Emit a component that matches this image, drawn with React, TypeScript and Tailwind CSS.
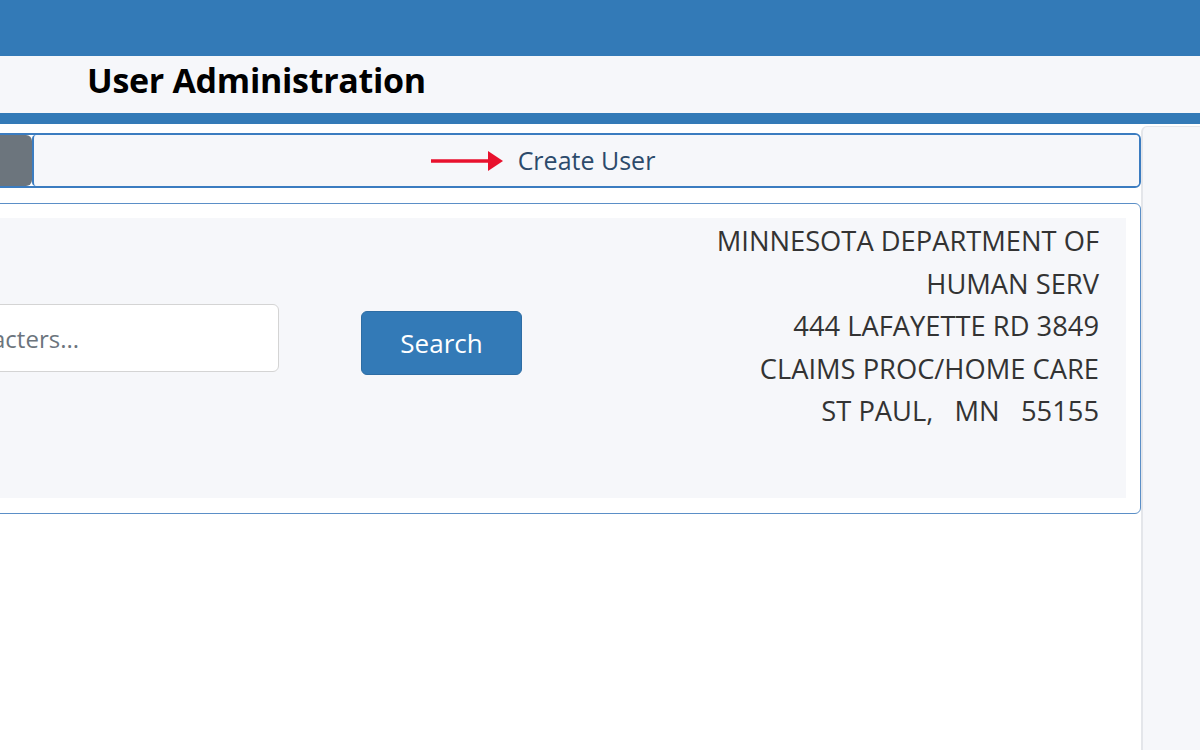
export default function App() {
    return (
        <div className="w-[1200px] h-[750px] overflow-hidden bg-white" style={{ fontFamily: '"Open Sans", "Noto Sans", sans-serif' }}>
            <div className="h-[56px] bg-[#337ab7]" />
            <div className="h-[57px] bg-[#f6f7fa] flex items-center pl-[87px] pb-[9px]">
                <h1 className="text-[34px] font-bold text-black tracking-[-0.3px]">User Administration</h1>
            </div>
            <div className="h-[11px] bg-[#337ab7]" />

            <div className="flex h-[626px]">
                <div className="w-[1141px] shrink-0 pt-[9px]">
                    {/* tab row */}
                    <div className="flex h-[55px] -ml-[12px] border-2 border-[#3b7cc0] rounded-r-[6px] overflow-hidden">
                        <div className="w-[42px] bg-[#6c757d] rounded-r-[6px]" />
                        <div className="flex-1 bg-[#f6f7fa] border-l-2 border-[#3b7cc0] rounded-l-[4px] flex items-center justify-center">
                            <div className="relative">
                                <svg className="absolute right-full top-1/2 -translate-y-1/2 mr-[15px]" width="72" height="24" viewBox="0 0 72 24">
                                    <path d="M0 12 H60" stroke="#e8112d" strokeWidth="3.5" />
                                    <path d="M57 2 L72 12 L57 22 Z" fill="#e8112d" />
                                </svg>
                                <span className="text-[25px] text-[#2c4a6b]">Create User</span>
                            </div>
                        </div>
                    </div>

                    {/* search card */}
                    <div className="mt-[15px] h-[311px] -ml-[12px] border border-[#5b8fc7] rounded-r-[6px] pt-[14px] pr-[14px] pb-[15px] bg-white">
                        <div className="h-full bg-[#f6f7fa] flex justify-between">
                            <div className="flex items-start pt-[86px]">
                                <input
                                    className="-ml-[430px] w-[720px] h-[68px] bg-white border border-[#d4d4d4] rounded-[6px] px-[14px] text-[24px] text-[#555] placeholder:text-[#6c757d] outline-none"
                                    placeholder="Enter name to search, 3 or more characters..."
                                    readOnly
                                />
                                <button className="ml-[82px] mt-[7px] w-[161px] h-[64px] bg-[#337ab7] border border-[#2e6da4] rounded-[6px] text-white text-[26px]">
                                    Search
                                </button>
                            </div>
                            <div className="pt-[2px] pr-[27px] text-right text-[27.3px] leading-[42.5px] text-[#333]">
                                <div>MINNESOTA DEPARTMENT OF</div>
                                <div>HUMAN SERV</div>
                                <div>444 LAFAYETTE RD 3849</div>
                                <div>CLAIMS PROC/HOME CARE</div>
                                <div className="whitespace-pre">ST PAUL,   MN   55155</div>
                            </div>
                        </div>
                    </div>
                </div>
                <div className="flex-1 mt-[2px] bg-[#f6f7fa] border-l-2 border-t border-[#e4e6ea] rounded-tl-[6px]" />
            </div>
        </div>
    );
}
